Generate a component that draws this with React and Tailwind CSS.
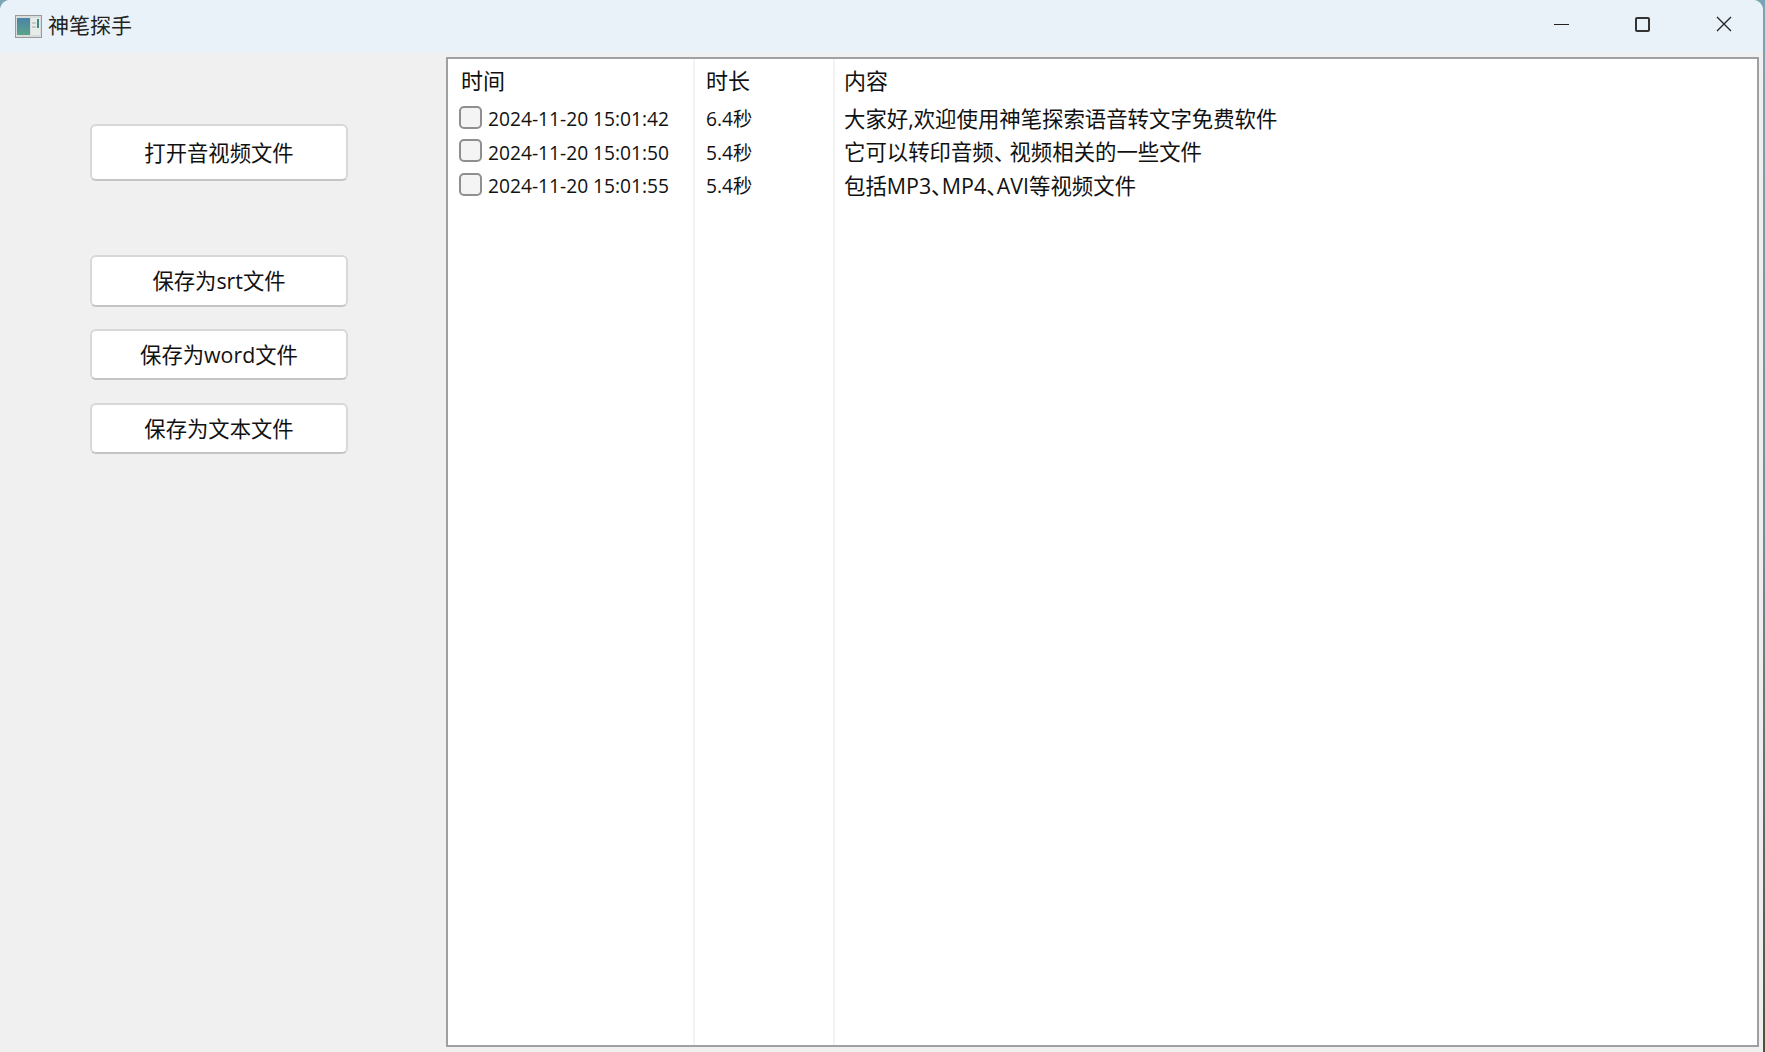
import React from 'react';

const rows = [
  { time: '2024-11-20 15:01:42', len: '6.4秒', text: '大家好,欢迎使用神笔探索语音转文字免费软件' },
  { time: '2024-11-20 15:01:50', len: '5.4秒', text: <>它可以转印音频<span className="mr-[5px]">、</span>视频相关的一些文件</> },
  { time: '2024-11-20 15:01:55', len: '5.4秒', text: '包括MP3、MP4、AVI等视频文件' },
];

const font = "font-['Open_Sans','Noto_Sans_CJK_SC',sans-serif]";

const SideButton = ({ label, className }) => (
  <button className={`w-[258px] rounded-[6px] border-2 border-[#d8d8d8] border-b-[#c4c4c4] bg-white text-[21.33px] text-[#111] ${className}`}>
    {label}
  </button>
);

const AppIcon = () => (
  <svg width="27" height="23" viewBox="0 0 27 23" className="shrink-0">
    <defs>
      <linearGradient id="appicon" x1="0" y1="0" x2="0" y2="1">
        <stop offset="0" stopColor="#4a84a8" />
        <stop offset="1" stopColor="#5aa48a" />
      </linearGradient>
    </defs>
    <rect x="0.5" y="0.5" width="26" height="22" fill="#d8dcdc" stroke="#9a9a9a" />
    <rect x="2" y="3" width="13" height="17" fill="url(#appicon)" />
    <rect x="16" y="3" width="9" height="17" fill="#e8ece8" />
    <rect x="22" y="4" width="2" height="9" fill="#3f8a86" />
    <rect x="17" y="7" width="4" height="2" fill="#c4cac6" />
    <rect x="17" y="11" width="4" height="2" fill="#c4cac6" />
  </svg>
);

const App = () => {
  return (
    <div className="w-[1765px] h-[1052px] bg-linear-to-b from-[#7aa5b5] via-[#6f8f96] to-[#4f4f3a] overflow-hidden">
      <div className={`w-[1763px] h-full flex flex-col bg-[#f0f0f0] rounded-t-[10px] [font-feature-settings:'halt'] ${font}`}>
        {/* TITLE BAR */}
        <div className="h-[52px] shrink-0 flex items-center justify-between bg-[#e9f2f8] rounded-t-[10px] pl-[15px]">
          <div className="flex items-center gap-[6px]">
            <AppIcon />
            <span className="text-[21px] text-[#222]">神笔探手</span>
          </div>
          <div className="flex items-center h-full pb-[4px] -mr-px">
            <div className="w-[81px] flex justify-center">
              <div className="w-[15px] h-px bg-[#222]" />
            </div>
            <div className="w-[81px] flex justify-center">
              <div className="w-[15px] h-[15px] rounded-[2px] border-2 border-[#333]" />
            </div>
            <div className="w-[81px] flex justify-center">
              <svg width="16" height="16" viewBox="0 0 16 16" stroke="#222" strokeWidth="1.3">
                <path d="M1 1 L15 15 M15 1 L1 15" />
              </svg>
            </div>
          </div>
        </div>

        <div className="flex-1 flex min-h-0">
          {/* SIDEBAR */}
          <div className="w-[446px] shrink-0 pl-[90px] pt-[72px] flex flex-col">
            <SideButton label="打开音视频文件" className="h-[57px]" />
            <SideButton label="保存为srt文件" className="h-[52px] mt-[74px]" />
            <SideButton label="保存为word文件" className="h-[51px] mt-[22px]" />
            <SideButton label="保存为文本文件" className="h-[51px] mt-[23px]" />
          </div>

          {/* TABLE */}
          <div className="flex-1 flex mt-[5px] mb-[5px] mr-[4px] bg-white border-2 border-[#a0a0a4] text-[#111]">
            <div className="w-[247px] shrink-0 border-r-2 border-[#f2f2f2]">
              <div className="h-[43px] flex items-center pl-[13px] text-[22px]">时间</div>
              {rows.map((row) => (
                <div key={row.time} className="h-[33.5px] flex items-center pl-[11px] gap-[6px] text-[19.2px] pt-[2px]">
                  <span className="w-[23px] h-[23px] -mt-[5px] rounded-[5px] border-2 border-[#8f8f8f] bg-[#f4f4f4]" />
                  {row.time}
                </div>
              ))}
            </div>
            <div className="w-[140px] shrink-0 border-r-2 border-[#f2f2f2]">
              <div className="h-[43px] flex items-center pl-[11px] text-[22px]">时长</div>
              {rows.map((row) => (
                <div key={row.time} className="h-[33.5px] flex items-center pl-[11px] text-[19.2px] pt-[2px]">
                  {row.len}
                </div>
              ))}
            </div>
            <div className="flex-1">
              <div className="h-[43px] flex items-center pl-[9px] text-[22px]">内容</div>
              {rows.map((row) => (
                <div key={row.time} className="h-[33.5px] flex items-center pl-[9px] text-[21.4px]">
                  {row.text}
                </div>
              ))}
            </div>
          </div>
        </div>
      </div>
    </div>
  );
};

export default App;
